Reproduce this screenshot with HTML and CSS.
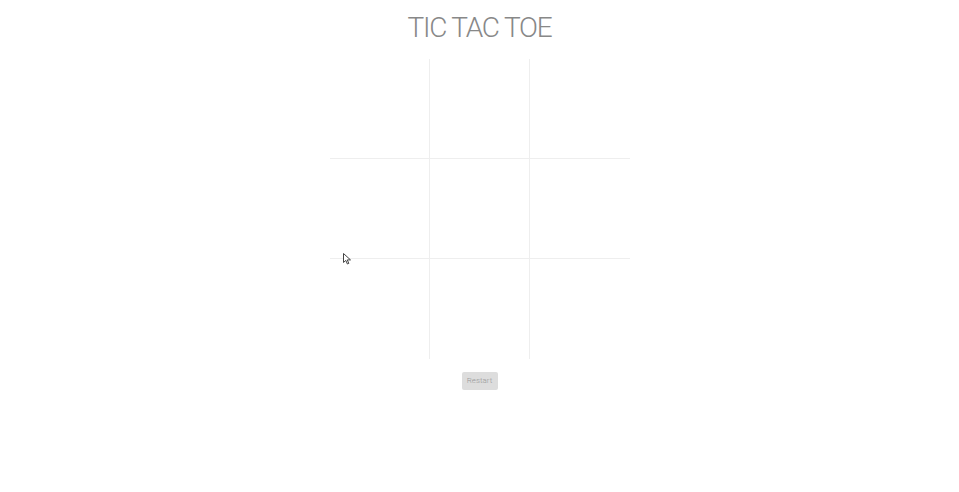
FILE: index.html
```html
<!DOCTYPE html>
<html lang="en">
<head>
    <meta charset="UTF-8">
    <meta name="viewport" content="width=device-width, initial-scale=1.0">
    <title>Tic Tac Toe</title>
    <link rel="stylesheet" href="styles.css">
</head>
<body>
    <h1>TIC TAC TOE</h1>

    <div class="board">
        <div class="cell"></div>
        <div class="cell"></div>
        <div class="cell"></div>
        <div class="cell"></div>
        <div class="cell"></div>
        <div class="cell"></div>
        <div class="cell"></div>
        <div class="cell"></div>
        <div class="cell"></div>
        <!-- mouse pointer captured in the screenshot -->
        <svg class="pointer" width="9" height="12" viewBox="0 0 9 12">
            <path d="M0.5 0.5 L0.5 9.5 L2.8 7.4 L4.4 11 L5.8 10.4 L4.3 6.9 L7.5 6.9 Z" fill="#fff" stroke="#444" stroke-width="1"/>
        </svg>
    </div>

    <div class="controls">
        <button type="button" class="restart">Restart</button>
    </div>
</body>
</html>
```

FILE: styles.css
```css
body {
    font-family: Roboto, "Liberation Sans", sans-serif;
    margin: 0;
    padding: 0;
    background: #fff;
}
h1 {
    margin: 0;
    padding-top: 11px;
    text-align: center;
    font-size: 28px;
    font-weight: 300;
    letter-spacing: -1.2px;
    color: #888;
    line-height: 34px;
}
.board {
    position: relative;
    width: 300px;
    margin: 14px auto 0;
    display: grid;
    grid-template-columns: repeat(3, 100px);
    grid-template-rows: repeat(3, 100px);
}
.cell {
    box-sizing: border-box;
    border-color: #eee;
    border-style: solid;
    border-width: 0;
}
.cell:nth-child(-n+6) {
    border-bottom-width: 1px;
}
.cell:nth-child(3n+1),
.cell:nth-child(3n+2) {
    border-right-width: 1px;
}
.pointer {
    position: absolute;
    left: 13px;
    top: 194px;
}
.controls {
    text-align: center;
    margin-top: 9px;
}
.restart {
    font-family: Roboto, "Liberation Sans", sans-serif;
    font-size: 8px;
    font-weight: 300;
    color: #999;
    background: #ddd;
    border: none;
    border-radius: 2px;
    width: 36px;
    height: 18px;
    padding: 0;
    cursor: pointer;
}
```
